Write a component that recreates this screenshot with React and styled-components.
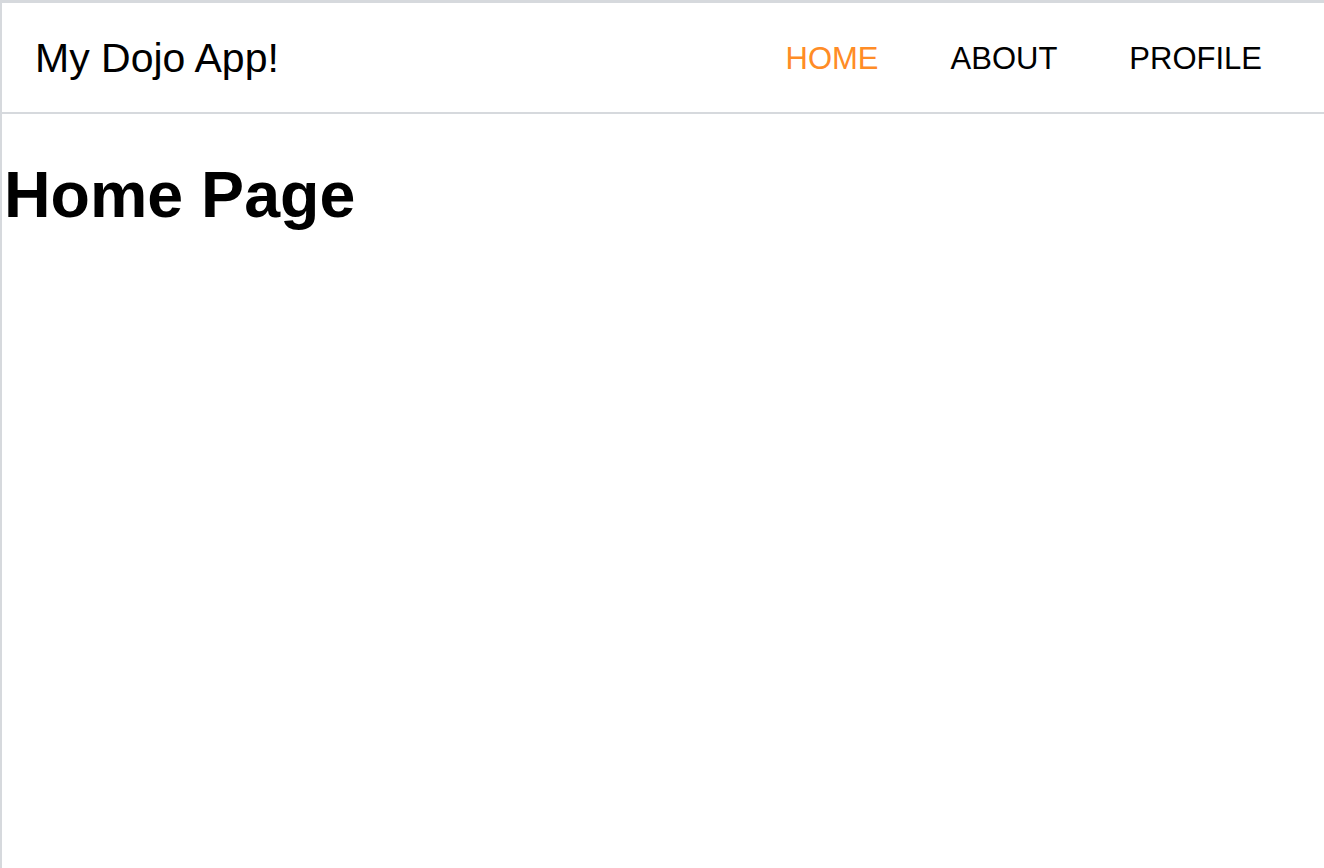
import React from 'react';
import styled, {createGlobalStyle} from 'styled-components';

const GlobalStyle = createGlobalStyle`
  body {
    margin: 0;
    font-family: "Liberation Sans", Arial, sans-serif;
    background: #fff;
    color: #000;
  }
`;

const Frame = styled.div`
  min-height: 100vh;
  box-sizing: border-box;
  border-top: 3px solid #d6d9dd;
  border-left: 2px solid #d6d9dd;
`;

const Toolbar = styled.header`
  height: 111px;
  box-sizing: border-box;
  display: flex;
  align-items: center;
  justify-content: space-between;
  padding: 2px 26px 0 33px;
  border-bottom: 2px solid #d6d9dd;
`;

const Title = styled.span`
  font-size: 41px;
  color: #000;
`;

const Menu = styled.nav`
  display: flex;
  align-items: center;
`;

const MenuLink = styled.a`
  font-size: 31px;
  padding: 0 36px;
  text-decoration: none;
  color: ${p => (p.$active ? '#ff8c26' : '#000')};
`;

const Heading = styled.h1`
  margin: 44px 0 0 2px;
  font-size: 64.5px;
  font-weight: bold;
`;

export default function App() {
  return (
    <>
      <GlobalStyle/>
      <Frame>
        <Toolbar>
          <Title>My Dojo App!</Title>
          <Menu>
            <MenuLink href="#home" $active>HOME</MenuLink>
            <MenuLink href="#about">ABOUT</MenuLink>
            <MenuLink href="#profile">PROFILE</MenuLink>
          </Menu>
        </Toolbar>
        <Heading>Home Page</Heading>
      </Frame>
    </>
  );
}
